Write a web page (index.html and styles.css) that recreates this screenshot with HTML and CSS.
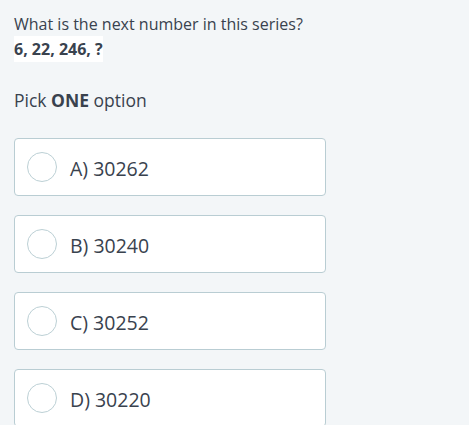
FILE: index.html
```html
<!DOCTYPE html>
<html>
<head>
<meta charset="utf-8">
<link rel="stylesheet" href="styles.css">
</head>
<body>
<div class="page">
  <div class="question">
    <p class="q-text">What is the next number in this series?</p>
    <p class="q-series"><span class="series-box">6, 22, 246, ?</span></p>
  </div>
  <p class="pick">Pick <strong>ONE</strong> option</p>
  <div class="options">
    <label class="option"><span class="radio"></span><span class="opt-text">A) 30262</span></label>
    <label class="option"><span class="radio"></span><span class="opt-text">B) 30240</span></label>
    <label class="option"><span class="radio"></span><span class="opt-text">C) 30252</span></label>
    <label class="option"><span class="radio"></span><span class="opt-text">D) 30220</span></label>
  </div>
</div>
</body>
</html>
```
FILE: styles.css
```css
html, body {
  margin: 0;
  padding: 0;
  background: #f3f6f8;
}
body {
  font-family: "Open Sans", "Liberation Sans", sans-serif;
  color: #39424e;
}
.page {
  padding: 13px 14px 0 14px;
  width: 312px;
}
.question p {
  margin: 0;
}
.q-text {
  font-size: 16px;
  line-height: 22px;
  color: #39424e;
}
.q-series {
  margin-top: 1px !important;
  font-size: 16px;
  font-weight: 700;
  line-height: 26px;
}
.series-box {
  display: inline-block;
  background: #ffffff;
}
.pick {
  margin: 25px 0 0 0;
  font-size: 17.5px;
  line-height: 26px;
}
.pick strong {
  font-weight: 700;
}
.options {
  display: flex;
  flex-direction: column;
  gap: 19px;
  margin-top: 25px;
}
.option {
  display: flex;
  align-items: center;
  height: 56px;
  background: #ffffff;
  border: 1px solid #b9cdd3;
  border-radius: 4px;
  padding-left: 12px;
}
.radio {
  width: 28px;
  height: 28px;
  border: 1px solid #bcd0d5;
  border-radius: 50%;
  background: #fff;
  flex: none;
}
.opt-text {
  margin-left: 13px;
  padding-top: 3px;
  font-size: 19.5px;
  color: #39424e;
}
```
